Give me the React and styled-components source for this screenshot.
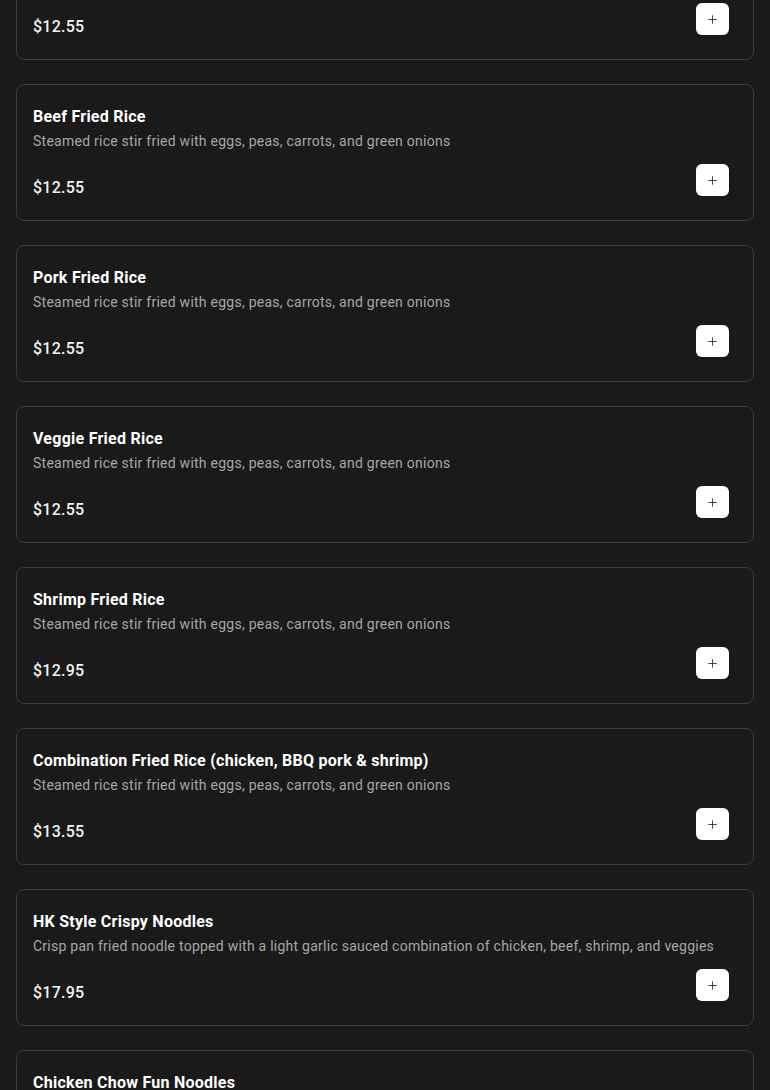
import styled, { createGlobalStyle } from "styled-components";
import { Plus } from "lucide-react";

const GlobalStyle = createGlobalStyle`
  * { box-sizing: border-box; }
  html, body {
    margin: 0;
    padding: 0;
    background: #1a1a1a;
    font-family: Roboto, "Liberation Sans", Arial, sans-serif;
    -webkit-font-smoothing: antialiased;
  }
`;

const Page = styled.div`
  padding: 0 16px 40px;
  overflow: hidden;
`;

const List = styled.div`
  display: flex;
  flex-direction: column;
  gap: 24px;
  margin-top: -77px;
`;

const Card = styled.div`
  display: flex;
  flex-direction: column;
  height: 137px;
  padding: 20px 24px 0 16px;
  background: #1a1a1a;
  border: 1px solid #3b3b3b;
  border-radius: 8px;
`;

const Title = styled.h3`
  margin: 0;
  font-size: 16px;
  line-height: 24px;
  font-weight: 700;
  letter-spacing: 0.25px;
  color: #ffffff;
`;

const Desc = styled.p`
  margin: 2px 0 0;
  font-size: 14px;
  line-height: 20px;
  letter-spacing: 0.25px;
  color: #a6a6a6;
`;

const Footer = styled.div`
  display: flex;
  justify-content: space-between;
  align-items: flex-end;
  margin-top: 13px;
`;

const Price = styled.span`
  font-size: 16px;
  line-height: 24px;
  font-weight: 500;
  letter-spacing: 0.25px;
  color: #f2f2f2;
`;

const AddButton = styled.button`
  display: flex;
  align-items: center;
  justify-content: center;
  width: 33px;
  height: 32px;
  margin-bottom: 4px;
  padding: 0;
  border: none;
  border-radius: 6px;
  background: #ffffff;
  color: #2a2a2a;
  cursor: pointer;
`;

const items = [
  { name: "Chicken Fried Rice", desc: "Steamed rice stir fried with eggs, peas, carrots, and green onions", price: "$12.55" },
  { name: "Beef Fried Rice", desc: "Steamed rice stir fried with eggs, peas, carrots, and green onions", price: "$12.55" },
  { name: "Pork Fried Rice", desc: "Steamed rice stir fried with eggs, peas, carrots, and green onions", price: "$12.55" },
  { name: "Veggie Fried Rice", desc: "Steamed rice stir fried with eggs, peas, carrots, and green onions", price: "$12.55" },
  { name: "Shrimp Fried Rice", desc: "Steamed rice stir fried with eggs, peas, carrots, and green onions", price: "$12.95" },
  { name: "Combination Fried Rice (chicken, BBQ pork & shrimp)", desc: "Steamed rice stir fried with eggs, peas, carrots, and green onions", price: "$13.55" },
  { name: "HK Style Crispy Noodles", desc: "Crisp pan fried noodle topped with a light garlic sauced combination of chicken, beef, shrimp, and veggies", price: "$17.95" },
  { name: "Chicken Chow Fun Noodles", desc: "Wide rice noodles stir fried with chicken, bean sprouts, and green onions", price: "$14.95" },
];

function App() {
  return (
    <>
      <GlobalStyle />
      <Page>
        <List>
          {items.map((item) => (
            <Card key={item.name}>
              <Title>{item.name}</Title>
              <Desc>{item.desc}</Desc>
              <Footer>
                <Price>{item.price}</Price>
                <AddButton aria-label={`Add ${item.name}`}>
                  <Plus size={13} strokeWidth={1.6} />
                </AddButton>
              </Footer>
            </Card>
          ))}
        </List>
      </Page>
    </>
  );
}

export default App;
